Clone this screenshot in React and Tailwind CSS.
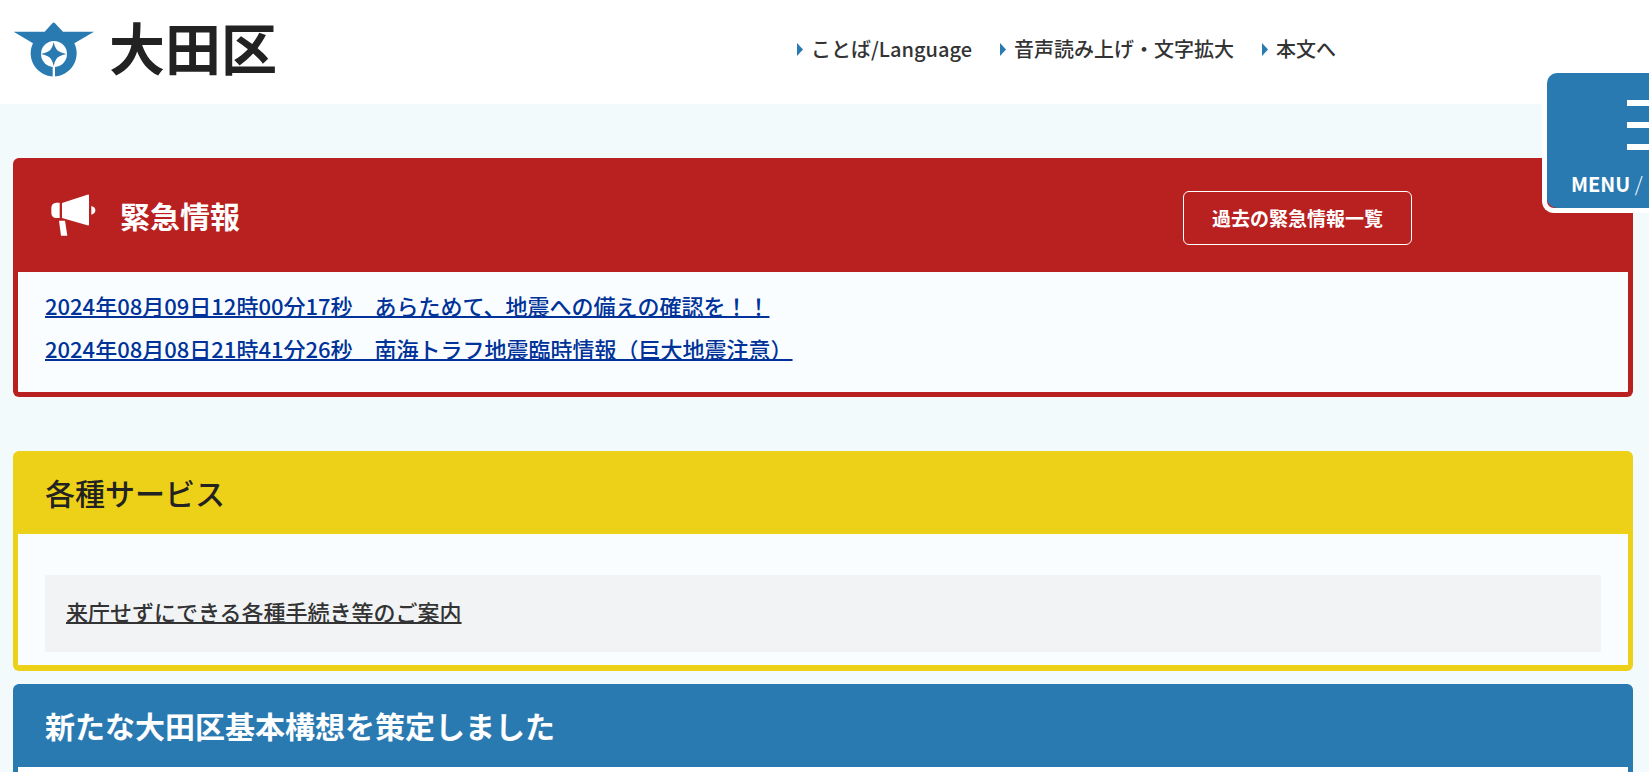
import React from 'react';

const NAV_LINKS = ['ことば/Language', '音声読み上げ・文字拡大', '本文へ'];

const ALERTS = [
  '2024年08月09日12時00分17秒　あらためて、地震への備えの確認を！！',
  '2024年08月08日21時41分26秒　南海トラフ地震臨時情報（巨大地震注意）',
];

function Emblem() {
  return (
    <svg viewBox="38 64 246 168" className="w-[82px] h-14 shrink-0" aria-hidden="true">
      <path
        d="M40 93H133L156 68Q160 63 164 68L188 93H281L222 128A69 69 0 1 1 98 128Z"
        fill="#2a7ab2"
      />
      <circle cx="161" cy="160" r="39" fill="#fff" />
      <path
        d="M160 124Q162 136 168 145Q173 154 198 160Q173 166 168 175Q162 184 160 196Q158 184 152 175Q147 166 122 160Q147 154 152 145Q158 136 160 124Z"
        fill="#2a7ab2"
      />
      <path d="M157 196H164V232H157Z" fill="#fff" />
    </svg>
  );
}

function Megaphone() {
  return (
    <svg viewBox="152 130 135 126" className="w-[45px] h-[42px] shrink-0" fill="#fff" aria-hidden="true">
      <path d="M178 156V202H168Q153 201 153 186V172Q153 157 168 156Z" />
      <path d="M185 157L261 132Q266 130 266 135V221Q266 226 261 224L185 202Z" />
      <path d="M273 166Q285 169 285 179Q285 189 273 192Z" />
      <path d="M176 210H194L201 255H182Z" />
    </svg>
  );
}

function Header() {
  return (
    <header className="flex items-center justify-between h-[104px] pl-[13px] pr-[313px] bg-white">
      <a href="#top" className="flex items-center gap-3.5 pb-1">
        <Emblem />
        <span className="pb-2 text-[56px] leading-none font-bold text-[#222]">大田区</span>
      </a>
      <nav aria-label="補助メニュー">
        <ul className="flex gap-7 pb-1.5">
          {NAV_LINKS.map((label) => (
            <li key={label}>
              <a href="#main" className="flex items-center gap-2 text-xl text-[#333]">
                <svg viewBox="0 0 6 13" className="w-1.5 h-[13px]" aria-hidden="true">
                  <path d="M0 0L6 6.5L0 13Z" fill="#2a7ab2" />
                </svg>
                {label}
              </a>
            </li>
          ))}
        </ul>
      </nav>
    </header>
  );
}

function MenuButton() {
  return (
    <div className="fixed top-[73px] -right-[98px] w-[205px] border-l-5 border-b-5 border-white rounded-bl-xl">
      <button
        type="button"
        className="flex flex-col items-start w-full h-[135px] pt-[27px] rounded-l-[10px] bg-[#2a7ab2] text-white"
      >
        <span className="flex flex-col gap-4 w-10 mx-auto" aria-hidden="true">
          <span className="h-1.5 bg-white" />
          <span className="h-1.5 bg-white" />
          <span className="h-1.5 bg-white" />
        </span>
        <span className="mt-5 ml-6 text-xl font-bold whitespace-nowrap">
          MENU <span className="font-light">/</span>
        </span>
      </button>
    </div>
  );
}

export default function App() {
  return (
    <div className="h-screen overflow-hidden bg-[#f2fafc] text-[#333] font-medium font-['Noto_Sans_CJK_JP',sans-serif]">
      <Header />
      <MenuButton />

      <main id="main" className="pl-[13px] pr-4 pt-[54px]">
        <section className="border-5 border-t-0 border-[#b92020] rounded-md bg-[#fafdff]">
          <div className="flex items-center justify-between h-[114px] pl-[33px] pr-[216px] bg-[#b92020] text-white">
            <div className="flex items-center gap-6">
              <Megaphone />
              <h2 className="text-[30px] leading-10 font-bold">緊急情報</h2>
            </div>
            <a
              href="#history"
              className="flex items-center h-[54px] mt-1.5 px-7 border border-white rounded-md text-[19px] font-bold"
            >
              過去の緊急情報一覧
            </a>
          </div>
          <ul className="px-[27px] pt-3 pb-[22px] text-[22px] leading-[43px] text-[#003399]">
            {ALERTS.map((alert) => (
              <li key={alert}>
                <a href="#alert" className="underline decoration-2">{alert}</a>
              </li>
            ))}
          </ul>
        </section>

        <section className="mt-[54px] border-5 border-t-0 border-b-6 border-[#edd119] rounded-md bg-[#fafdff]">
          <h2 className="h-[83px] px-[27px] text-[30px] leading-[83px] font-medium bg-[#edd119] text-[#222]">
            各種サービス
          </h2>
          <div className="px-[27px] pt-[41px] pb-[13px]">
            <div className="px-[21px] pb-1 bg-[#f2f3f5] text-[22px] leading-[73px]">
              <a href="#services" className="underline decoration-2">来庁せずにできる各種手続き等のご案内</a>
            </div>
          </div>
        </section>

        <section className="mt-[13px] border-5 border-t-0 border-[#2a7ab2] rounded-md bg-white">
          <h2 className="h-[83px] px-[27px] text-[30px] leading-[83px] font-bold bg-[#2a7ab2] text-white">
            新たな大田区基本構想を策定しました
          </h2>
          <div className="h-10" />
        </section>
      </main>
    </div>
  );
}
